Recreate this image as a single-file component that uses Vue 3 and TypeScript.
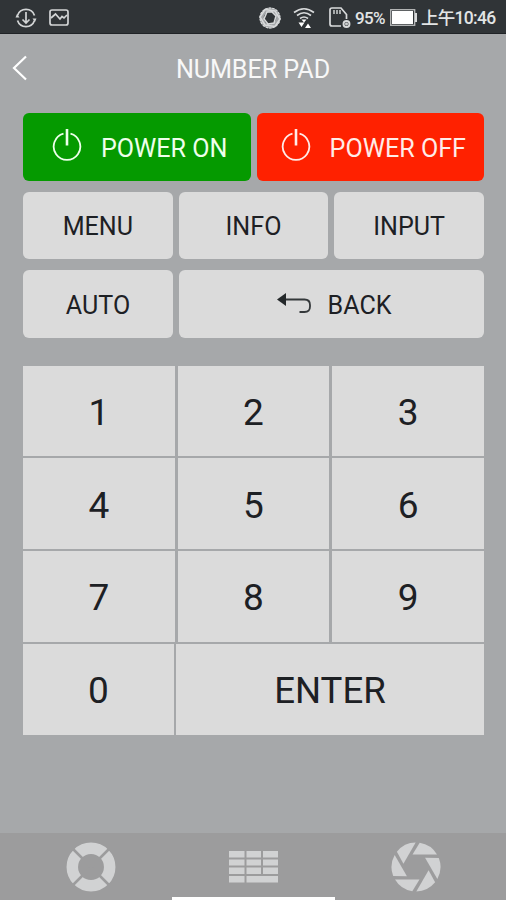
<script setup lang="ts">
interface PadKey { label: string; wide?: boolean }

const rows: PadKey[][] = [
  [{ label: '1' }, { label: '2' }, { label: '3' }],
  [{ label: '4' }, { label: '5' }, { label: '6' }],
  [{ label: '7' }, { label: '8' }, { label: '9' }],
  [{ label: '0' }, { label: 'ENTER', wide: true }],
]
const blades: number[] = [0, 60, 120, 180, 240, 300]
</script>

<template>
  <main class="screen">
    <div class="status">
      <svg class="sync" width="22" height="22" viewBox="0 0 22 22" fill="none" stroke="#d3d5d6" stroke-width="1.7">
        <path d="M2.500 8.500A9 9 0 0 1 19.500 8.500M2.500 13.500A9 9 0 0 0 19.500 13.500M11 5v11M7.500 12.500L11 16l3.500-3.500" />
        <path d="M.5 10.500h4L2 7zM17.500 11.500h4l-1.500 3.500z" fill="#d3d5d6" stroke="none" />
      </svg>
      <svg class="photo" width="20" height="17" viewBox="0 0 20 17" fill="none" stroke="#d3d5d6" stroke-width="1.7">
        <rect x="1" y="1" width="18" height="15" rx="2" />
        <path d="M2 9l4.500-4 4.500 5 2-2.500 2 1.500 3-3" />
      </svg>
      <span class="grow"></span>
      <svg class="rotate" width="24" height="22" viewBox="0 0 24 22" fill="none" stroke="#d8dadb">
        <circle cx="12" cy="11" r="8.300" stroke="#a4a7a9" stroke-width="4.200" />
        <path d="M7 2.500L17 4l5 8-5 7.500L7 18 2 10zM9 5L6 12l4 5 6-1 2-7-4-4z" stroke-width="1.500" />
        <circle cx="12" cy="11" r="10" stroke-width="1.200" stroke-dasharray="2.500 1" />
      </svg>
      <svg class="wifi" width="22" height="22" viewBox="0 0 22 22" fill="none" stroke="#d8dadb" stroke-width="1.600">
        <path d="M1 5.500Q11-2 21 5.500M4 8.500q7-5.500 14 0M7 11.500q4-3 8 0" />
        <path d="M5.500 15.500h6l-3 4.500zM12 21h6l-3-4.500zM8.500 12.500h5L11 15.500z" fill="#fff" stroke="none" />
      </svg>
      <svg class="sim" width="22" height="22" viewBox="0 0 22 22" fill="none" stroke="#d8dadb" stroke-width="1.700">
        <path d="M12 19H3q-2 0-2-2V3q0-2 2-2h9l5.500 6.500V12" />
        <path d="M5 3v4M8 3v4M11 3v4" stroke-width="1.400" />
        <circle cx="17.500" cy="17" r="3" stroke-width="1.900" /><circle cx="17.500" cy="17" r=".6" />
      </svg>
      <span class="percent">95%</span>
      <svg class="battery" width="28" height="17" viewBox="0 0 28 17">
        <rect x=".7" y=".7" width="24" height="15.600" fill="none" stroke="#b8babb" stroke-width="1.300" />
        <path d="M2 2h21v13H2z" fill="#fff" /><path d="M25 4h2v9h-2z" fill="#d8dadb" />
      </svg>
      <span class="clock">上午10:46</span>
    </div>

    <header class="header">
      <svg class="chevron" width="16" height="26" viewBox="0 0 16 26" fill="none" stroke="#fff" stroke-width="2.200">
        <path d="M14 1.500L2 13l12 11.500" />
      </svg>
      <h1>NUMBER PAD</h1>
    </header>

    <section class="controls">
      <div class="row">
        <button class="btn on">
          <svg class="power" width="30" height="34" viewBox="0 0 30 34" fill="none" stroke="currentColor" stroke-width="1.800">
            <path d="M11.500 5.700a13.300 13.300 0 1 0 7 0" /><path d="M15 1v16.500" stroke-width="2.600" />
          </svg>
          <span>POWER ON</span>
        </button>
        <button class="btn off">
          <svg class="power" width="30" height="34" viewBox="0 0 30 34" fill="none" stroke="currentColor" stroke-width="1.800">
            <path d="M11.500 5.700a13.300 13.300 0 1 0 7 0" /><path d="M15 1v16.500" stroke-width="2.600" />
          </svg>
          <span>POWER OFF</span>
        </button>
      </div>
      <div class="row">
        <button class="btn">MENU</button>
        <button class="btn">INFO</button>
        <button class="btn">INPUT</button>
      </div>
      <div class="row last">
        <button class="btn">AUTO</button>
        <button class="btn">
          <svg class="return" width="34" height="22" viewBox="0 0 34 22" fill="none" stroke="#34383a" stroke-width="1.800">
            <path d="M7 7.500h20.500q5.500 0 5.500 5.500v1.500q0 5.500-5.500 5.500h-5" /><path d="M0 7.500L9 1v13z" fill="#24282a" stroke="none" />
          </svg>
          <span>BACK</span>
        </button>
      </div>
    </section>

    <section class="pad">
      <div v-for="(row, i) in rows" :key="i" class="pad-row" :class="{ short: row.length === 2 }">
        <button v-for="key in row" :key="key.label" class="key" :class="{ wide: key.wide }">{{ key.label }}</button>
      </div>
    </section>

    <nav class="tabs">
      <svg class="tab" width="50" height="50" viewBox="-25 -25 50 50">
        <circle r="18.700" fill="none" stroke="#d1d2d3" stroke-width="11.500" />
        <path d="M-18-18L18 18M18-18L-18 18" stroke="#9c9c9d" stroke-width="2.500" />
      </svg>
      <svg class="tab grid-tab" width="50" height="32" viewBox="0 0 50 32" fill="#d1d2d3">
        <path d="M0 0h15.500v6.500H0zM17.500 0h14.500v6.500H17.500zM34 0h15v6.500H34zM0 8.500h15.500v6H0zM17.500 8.500h14.500v6H17.500zM34 8.500h15v6H34zM0 16.500h15.500v6.500H0zM17.500 16.500h14.500v6.500H17.500zM34 16.500h15v6.500H34zM0 25h15.500v6.500H0zM17.500 25H49v6.500H17.500z" />
      </svg>
      <svg class="tab aperture" width="50" height="50" viewBox="-25 -25 50 50">
        <path v-for="a in blades" :key="a" d="M3.700-24.200A24.500 24.500 0 0 1 21-12.500H-3.500z" fill="#d1d2d3" :transform="`rotate(${a})`" />
      </svg>
      <span class="indicator"></span>
    </nav>
  </main>
</template>

<style>
body { margin: 0; }
</style>

<style scoped>
.screen { box-sizing: border-box; width: 506px; height: 900px; display: flex; flex-direction: column; overflow: hidden; background: #a6a8aa; font-family: Roboto, "Noto Sans CJK TC", sans-serif; }
.status { box-sizing: border-box; height: 34px; flex: none; display: flex; align-items: center; padding: 2px 10px 0 15px; background: #303437; border-bottom: 1px solid #202326; color: #e2e4e5; }
.photo { margin-left: 12px; }
.grow { flex: 1; }
.wifi { margin-left: 11px; }
.sim { margin-left: 14px; }
.percent { width: 32px; margin-left: 4px; font-size: 17px; font-weight: 500; letter-spacing: -.6px; white-space: nowrap; }
.battery { margin-left: 3px; }
.clock { width: 75px; margin-left: 3px; font-size: 17.500px; font-weight: 500; letter-spacing: -.7px; line-height: 26px; white-space: nowrap; }
.header { height: 79px; flex: none; display: grid; grid-template-columns: 36px 1fr 36px; align-items: start; }
.chevron { margin: 21px 0 0 12px; }
h1 { margin: 21px 0 0; font-size: 25.200px; line-height: 30px; font-weight: 400; color: #f8f8f8; text-align: center; letter-spacing: -.1px; }
.controls { display: grid; gap: 11px; padding: 0 22px 0 23px; }
.row { display: grid; grid-template-columns: repeat(3, 1fr); gap: 6px; height: 67.500px; }
.row:first-child { grid-template-columns: 1fr 1fr; }
.row.last { grid-template-columns: 150px 1fr; }
button { border: 0; padding: 0; font-family: inherit; color: #1d2024; background: #dbdbdb; }
.btn { display: flex; align-items: center; justify-content: center; border-radius: 6px; font-size: 25.100px; line-height: 30px; white-space: nowrap; padding-top: 4px; }
.btn.on { background: #059a00; color: #eeffeb; }
.btn.off { background: #ff2100; color: #ffece8; }
.power { margin: -8px 19px 0 6px; }
.off .power { margin: -8px 19px 0 6px; }
.return { margin: -6px 17px 0 5px; }
.pad { display: grid; gap: 2.500px; margin: 28px 22px 0 23px; }
.pad-row { display: grid; grid-template-columns: repeat(3, 1fr); gap: 3px; height: 90.400px; }
.short { grid-template-columns: 151px 1fr; gap: 2px; }
.key { font-size: 37px; line-height: 44px; padding-top: 4px; }
.wide { font-size: 36.600px; }
.tabs { position: relative; height: 67px; flex: none; margin-top: auto; background: #9c9c9d; display: grid; grid-template-columns: 182px 142px 182px; justify-items: center; align-items: center; }
.grid-tab { margin-left: 2px; }
.aperture { margin-left: 2px; }
.indicator { position: absolute; left: 172px; bottom: 0; width: 163px; height: 3px; background: #fff; }
</style>
